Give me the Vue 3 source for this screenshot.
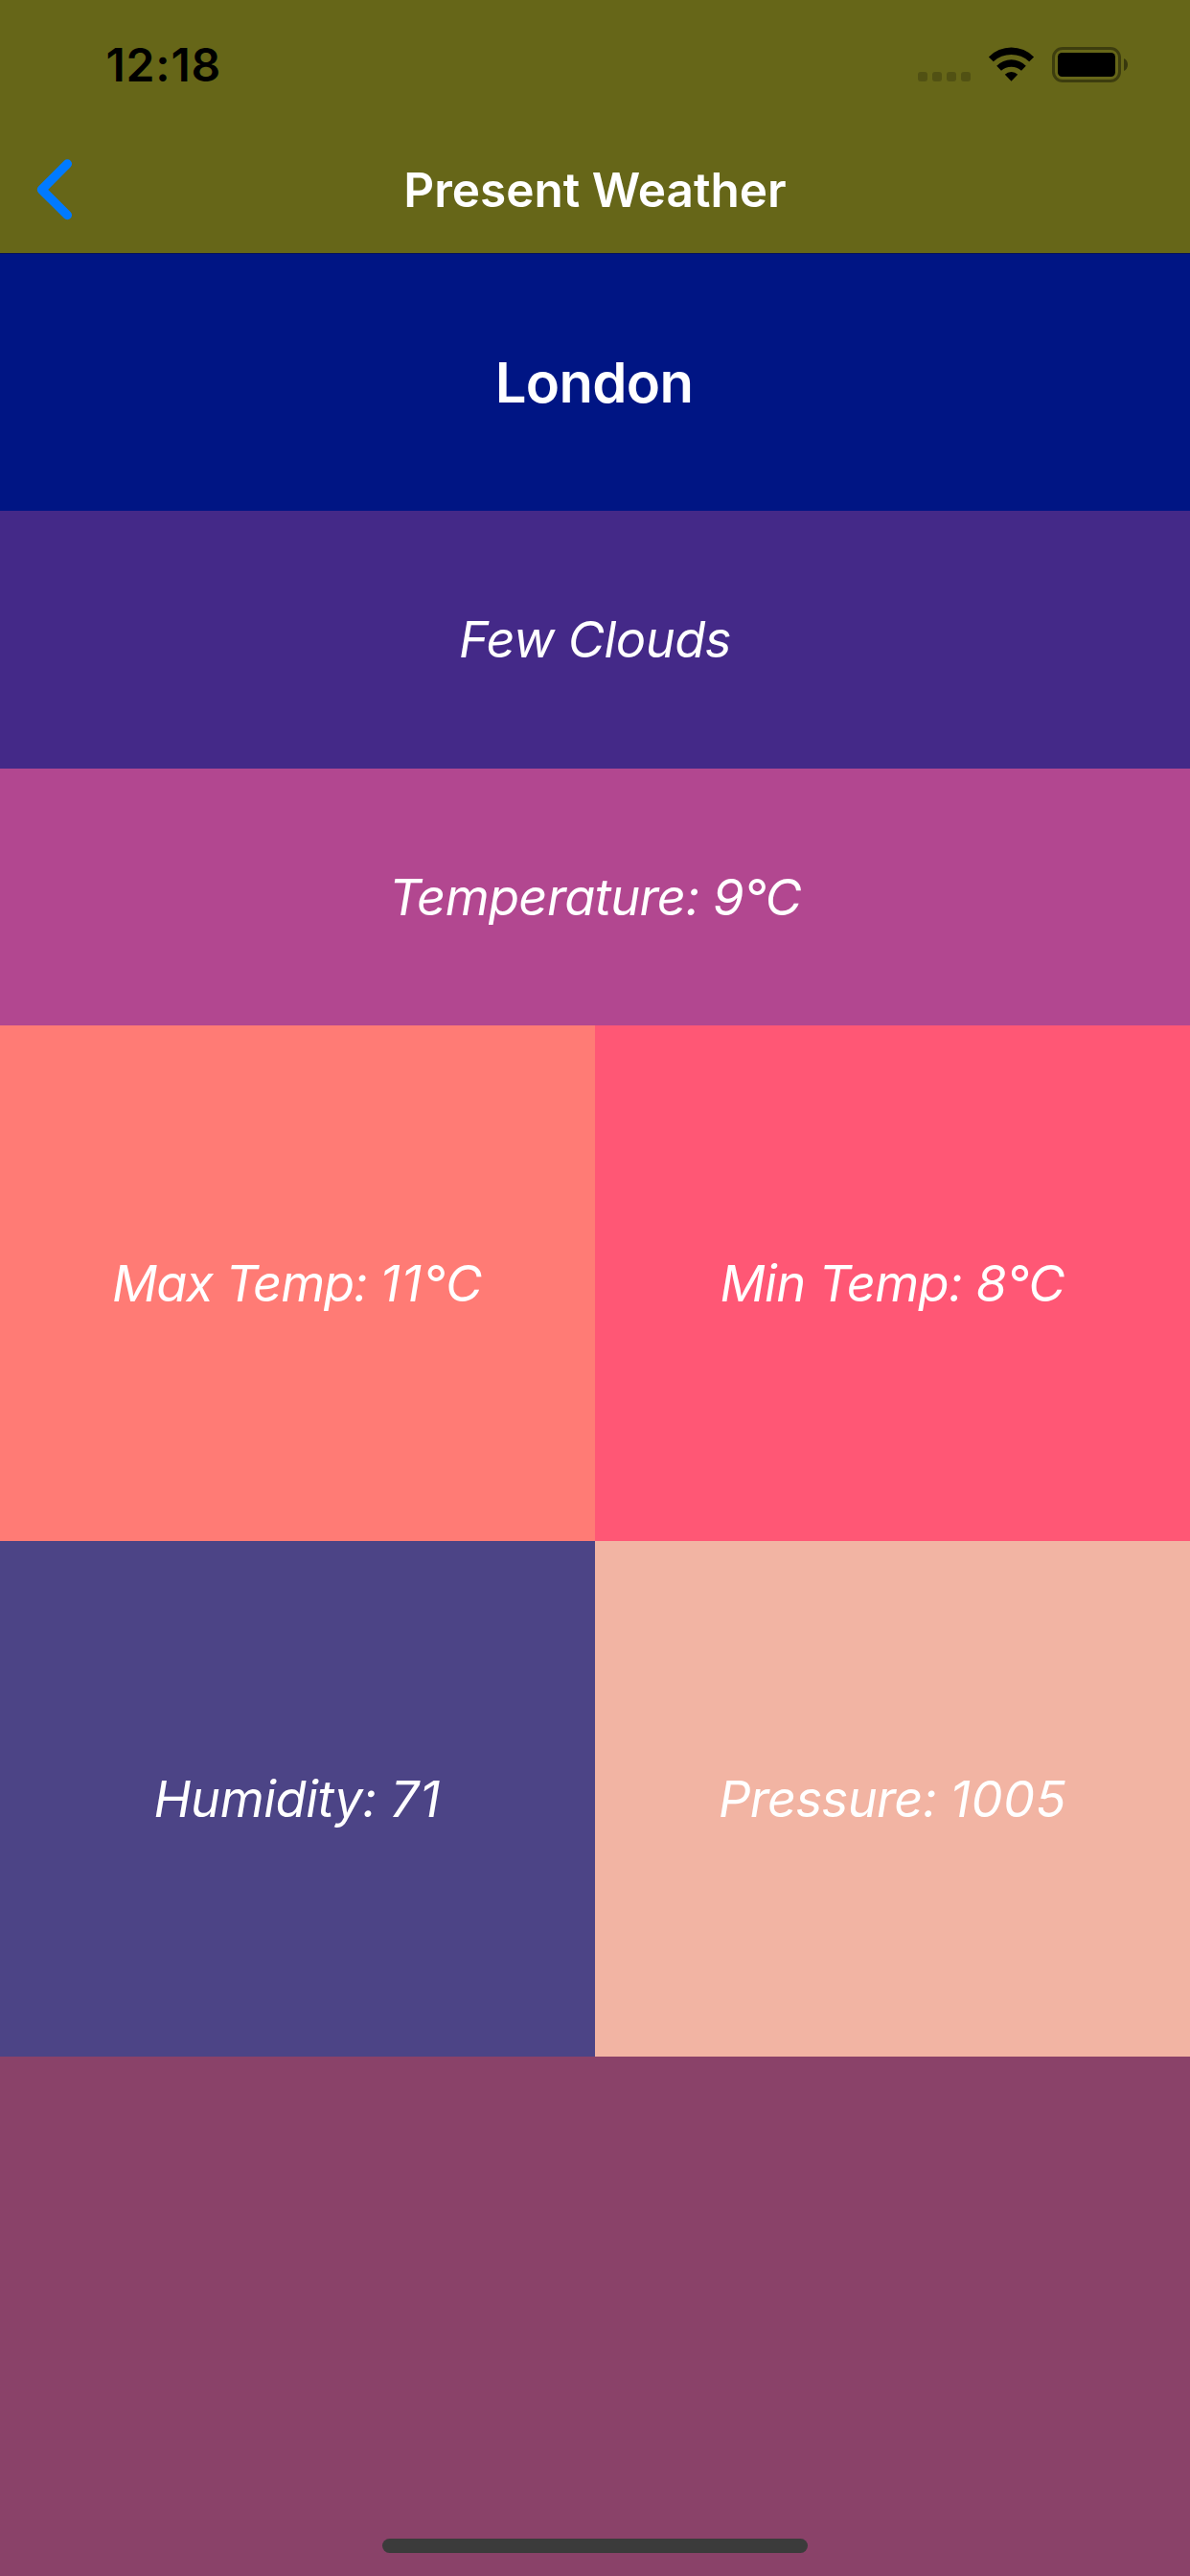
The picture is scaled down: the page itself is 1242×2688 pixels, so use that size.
<script setup>
const tiles = [
  { key: 'max', label: 'Max Temp: ', value: '11°C' },
  { key: 'min', label: 'Min Temp: ', value: '8°C' },
  { key: 'humidity', label: 'Humidity: ', value: '71' },
  { key: 'pressure', label: 'Pressure: ', value: '1005' },
]
</script>

<template>
  <div class="screen">
    <header class="header">
      <div class="status">
        <span class="time">12:18</span>
        <div class="indicators">
          <svg class="dots" width="55" height="10" viewBox="0 0 55 10">
            <rect v-for="i in 4" :key="i" :x="(i - 1) * 15" width="10" height="10" rx="3" />
          </svg>
          <svg class="wifi" width="49" height="37" viewBox="0 0 49 37">
            <path d="M0.9 10.4A33 33 0 0 1 48.1 10.4L43.2 15.3A27.4 27.4 0 0 0 5.8 15.3Z" />
            <path d="M9.2 19.7A21.5 21.5 0 0 1 39.8 19.7L35 24.8A15.8 15.8 0 0 0 14 24.8Z" />
            <path d="M17.8 28.8A9.6 9.6 0 0 1 31.2 28.8L24.5 35.7Z" />
          </svg>
          <svg class="battery" width="79" height="37" viewBox="0 0 79 37">
            <rect class="shell" x="1.5" y="1.5" width="69" height="34" rx="9.5" />
            <rect x="6" y="6" width="60" height="25" rx="4.5" />
            <path class="cap" d="M75 12C77.6 13 79 15.6 79 18.5S77.6 24 75 25Z" />
          </svg>
        </div>
      </div>
      <nav class="nav">
        <div class="side">
          <svg class="back" width="38" height="64" viewBox="0 0 38 64">
            <path d="M32.3 5L5.5 31.8L32.3 58.5" />
          </svg>
        </div>
        <h1 class="title">Present Weather</h1>
        <div class="side"></div>
      </nav>
    </header>

    <main class="content">
      <section class="row city"><h2>London</h2></section>
      <section class="row sky">Few Clouds</section>
      <section class="row temp">Temperature: 9°C</section>
      <div class="grid">
        <section v-for="t in tiles" :key="t.key" class="tile" :class="t.key">
          <span class="label">{{ t.label }}</span><span class="value">{{ t.value }}</span>
        </section>
      </div>
    </main>

    <footer class="footer"><div class="home-bar"></div></footer>
  </div>
</template>

<style>
body {
  margin: 0;
}
</style>

<style scoped>
.screen {
  display: flex;
  flex-direction: column;
  width: 1242px;
  height: 2688px;
  overflow: hidden;
  background: #8a4269;
  color: #fff;
  font-family: Inter, 'Liberation Sans', sans-serif;
}
.header {
  height: 264px;
  background: #666618;
}
.status {
  display: flex;
  justify-content: space-between;
  align-items: center;
  box-sizing: border-box;
  height: 132px;
  padding: 0 65px 0 110.5px;
}
.time {
  color: #000;
  font-size: 48px;
  font-weight: 600;
  letter-spacing: 0.8px;
  line-height: 60px;
  margin-top: 3px;
}
.indicators {
  display: flex;
  align-items: flex-end;
  height: 37px;
  margin-top: 3px;
}
.dots {
  margin: 0 18px 1px 0;
  opacity: 0.2;
}
.wifi {
  margin-right: 18px;
}
.shell {
  fill: none;
  stroke: #000;
  stroke-width: 3;
  opacity: 0.4;
}
.cap {
  opacity: 0.45;
}
.nav {
  display: flex;
  align-items: center;
  height: 132px;
}
.side {
  flex: 1;
  display: flex;
  padding-left: 38px;
}
.side:last-child {
  padding: 0 38px 0 0;
}
.back path {
  fill: none;
  stroke: #007aff;
  stroke-width: 9.5;
  stroke-linecap: round;
  stroke-linejoin: round;
}
.title {
  margin: 0;
  font-size: 49.5px;
  font-weight: 600;
  line-height: 60px;
}
.row,
.tile {
  display: flex;
  align-items: center;
  justify-content: center;
  font-size: 52.4px;
  font-style: italic;
  line-height: 64px;
  letter-spacing: -0.5px;
  white-space: pre;
}
.row {
  box-sizing: border-box;
  height: 269px;
}
.city {
  border-top: 1px solid #06125c;
  background: #001584;
  font-style: normal;
}
.city h2 {
  margin: 0;
  font-size: 58px;
  font-weight: 600;
  line-height: 70px;
  letter-spacing: -0.68px;
  padding-right: 2px;
}
.sky {
  padding-bottom: 1px;
  background: #442988;
}
.temp {
  height: 268px;
  background: #b24790;
  letter-spacing: -0.63px;
}
.grid {
  display: grid;
  grid-template-columns: 1fr 1fr;
  grid-auto-rows: 538px;
}
.max {
  background: #ff7b75;
}
.max .label {
  letter-spacing: -1.1px;
}
.max .value {
  letter-spacing: 0.8px;
}
.min {
  background: #ff5775;
}
.min .label {
  letter-spacing: -0.65px;
}
.min .value {
  letter-spacing: 0;
}
.humidity {
  background: #4c4486;
}
.humidity .label {
  letter-spacing: -0.4px;
}
.humidity .value {
  letter-spacing: 1px;
}
.pressure {
  background: #f2b4a3;
}
.pressure .label {
  letter-spacing: -0.6px;
}
.pressure .value {
  letter-spacing: 0.6px;
}
.footer {
  flex: 1;
  display: flex;
  align-items: flex-end;
  justify-content: center;
}
.home-bar {
  width: 444px;
  height: 15px;
  margin-bottom: 24px;
  border-radius: 8px;
  background: #3b3b3b;
}
</style>
